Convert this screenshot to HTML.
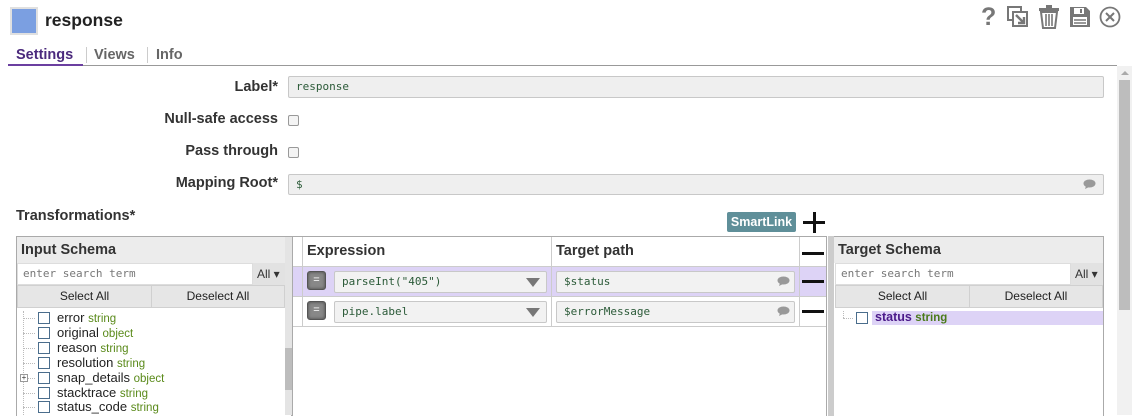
<!DOCTYPE html>
<html><head><meta charset="utf-8"><style>
*{box-sizing:border-box;margin:0;padding:0}
body{width:1140px;height:415px;overflow:hidden;background:#fff;font-family:"Liberation Sans",sans-serif;color:#333;position:relative}
.a{position:absolute}
.b{font-weight:bold}
.h{font-family:"Liberation Sans",sans-serif;font-weight:bold;font-size:14.5px}
.lbl{position:absolute;right:862px;font-size:14.5px;font-weight:bold;color:#333;white-space:nowrap}
.inp{position:absolute;background:#efefef;border:1px solid #c8c8c8;border-radius:2px;font-family:"DejaVu Sans Mono","Liberation Mono",monospace;font-size:11px;color:#2b5a38;padding-left:7px;line-height:20px}
.cb{position:absolute;width:11px;height:11px;border:1px solid #999;border-radius:2px;background:#f4f4f4}
.mono{font-family:"DejaVu Sans Mono","Liberation Mono",monospace}
.tree{font-family:"Liberation Sans",sans-serif;font-size:13px;color:#222;position:absolute;left:57px;white-space:nowrap}
.tree i{font-style:normal;color:#5a8a1a;font-size:11.5px}
.tcb{position:absolute;left:38px;width:12px;height:12px;border:1px solid #4a6d8c;background:#fff}
.dot{position:absolute;left:23px;width:12px;border-top:1px dotted #bbb}
.sel{position:absolute;font-family:"Liberation Sans",sans-serif;font-size:12px;color:#222;text-align:center;line-height:21px;background:#e6e6e6;border:1px solid #d0d0d0}
.minus{position:absolute;width:22px;height:3px;background:#111}
.eq{position:absolute;width:19px;height:19px;background:#888;border:1px solid #555;border-radius:3px;box-shadow:inset 0 0 3px #444;color:#fff;font-size:11px;text-align:center;line-height:17px}
</style></head><body>
<div class="a" style="left:10px;top:7px;width:28px;height:28px;background:#7b9fe1;border:2px solid #e0e0e0"></div>
<div class="a b" style="left:45px;top:10px;font-size:17.5px;color:#222">response</div>
<div class="a" style="left:981px;top:3px;font-size:25px;color:#777;font-weight:bold">?</div>
<svg class="a" style="left:1007px;top:6px" width="22" height="22" viewBox="0 0 22 22"><rect x="1" y="1" width="13" height="13" fill="none" stroke="#777" stroke-width="2"/><rect x="6" y="6" width="14" height="14" fill="#fff" stroke="#777" stroke-width="2"/><path d="M9 9l8 8M11 17h6v-6" stroke="#777" stroke-width="2.4" fill="none"/></svg>
<svg class="a" style="left:1038px;top:5px" width="22" height="24" viewBox="0 0 22 24"><rect x="1" y="3" width="20" height="3" fill="#777"/><rect x="8" y="0" width="6" height="3" fill="#777"/><path d="M3 7l2 16h12l2-16z" fill="none" stroke="#777" stroke-width="2"/><path d="M8 9v12M11 9v12M14 9v12" stroke="#777" stroke-width="1.6"/></svg>
<svg class="a" style="left:1069px;top:6px" width="22" height="22" viewBox="0 0 22 22"><path d="M1 1h16l4 4v16H1z" fill="#777"/><rect x="5" y="2" width="10" height="6" fill="#fff"/><rect x="11" y="3" width="2" height="4" fill="#777"/><rect x="4" y="11" width="14" height="8" fill="#fff"/><path d="M5 14h12M5 17h12" stroke="#777" stroke-width="1.5"/></svg>
<svg class="a" style="left:1099px;top:6px" width="22" height="22" viewBox="0 0 22 22"><circle cx="11" cy="11" r="9.5" fill="none" stroke="#777" stroke-width="1.8"/><path d="M7 7l8 8M15 7l-8 8" stroke="#777" stroke-width="2"/></svg>
<div class="a h" style="left:16px;top:47px;color:#4b2a7d">Settings</div>
<div class="a" style="left:8px;top:64px;width:75px;height:2px;background:#6b3fa0"></div>
<div class="a" style="left:86px;top:47px;width:1px;height:16px;background:#ccc"></div>
<div class="a h" style="left:94px;top:47px;color:#666">Views</div>
<div class="a" style="left:147px;top:47px;width:1px;height:16px;background:#ccc"></div>
<div class="a h" style="left:156px;top:47px;color:#666">Info</div>
<div class="a" style="left:83px;top:65px;width:1034px;height:1px;background:#999"></div>
<div class="a" style="left:1117px;top:66px;width:15px;height:349px;background:#f1f1f1"></div>
<div class="a" style="left:1119px;top:80px;width:11px;height:230px;background:#bdbdbd"></div>
<div class="a" style="left:1121px;top:71px;width:0;height:0;border-left:4px solid transparent;border-right:4px solid transparent;border-bottom:4px solid #aaa"></div>
<div class="lbl" style="top:79px">Label*</div>
<div class="inp" style="left:288px;top:76px;width:816px;height:22px">response</div>
<div class="lbl" style="top:111px">Null-safe access</div>
<div class="cb" style="left:288px;top:115px"></div>
<div class="lbl" style="top:143px">Pass through</div>
<div class="cb" style="left:288px;top:147px"></div>
<div class="lbl" style="top:175px">Mapping Root*</div>
<div class="inp" style="left:288px;top:174px;width:816px;height:21px">$</div>
<svg class="a" style="left:1083px;top:179px" width="13" height="11"><ellipse cx="6.5" cy="4.5" rx="6" ry="4" fill="#999"/><path d="M3 7l-1 3 4-2z" fill="#999"/></svg>
<div class="a h" style="left:16px;top:208px">Transformations*</div>
<div class="a b" style="left:727px;top:212px;width:69px;height:20px;background:#5f8f99;color:#fff;font-size:12.5px;line-height:20px;text-align:center;border-radius:2px;white-space:nowrap">SmartLink</div>
<div class="a" style="left:803px;top:221px;width:22px;height:3px;background:#111"></div>
<div class="a" style="left:813px;top:212px;width:3px;height:21px;background:#111"></div>
<div class="a" style="left:16px;top:236px;width:276px;height:180px;border:1px solid #aaa;border-bottom:none;background:#fff"></div>
<div class="a" style="left:17px;top:237px;width:268px;height:26px;background:#ececec"></div>
<div class="a h" style="left:21px;top:242px">Input Schema</div>
<div class="a mono" style="left:17px;top:263px;width:236px;height:22px;border:1px solid #ddd;font-size:11px;color:#777;padding-left:5px;line-height:20px">enter search term</div>
<div class="a" style="left:253px;top:263px;width:32px;height:22px;background:#e2e2e2;font-size:12px;line-height:22px;padding-left:4px">All ▾</div>
<div class="sel" style="left:17px;top:285px;width:135px;height:23px">Select All</div>
<div class="sel" style="left:151px;top:285px;width:134px;height:23px">Deselect All</div>
<div class="a" style="left:285px;top:237px;width:7px;height:178px;background:#e4e4e4"></div>
<div class="a" style="left:285px;top:348px;width:7px;height:42px;background:#bdbdbd"></div>
<div class="a" style="left:23px;top:311px;height:104px;border-left:1px dotted #bbb"></div>
<div class="dot" style="top:318px"></div><div class="tcb" style="top:312px"></div><div class="tree" style="top:310px">error <i>string</i></div>
<div class="dot" style="top:333px"></div><div class="tcb" style="top:327px"></div><div class="tree" style="top:325px">original <i>object</i></div>
<div class="dot" style="top:348px"></div><div class="tcb" style="top:342px"></div><div class="tree" style="top:340px">reason <i>string</i></div>
<div class="dot" style="top:363px"></div><div class="tcb" style="top:357px"></div><div class="tree" style="top:355px">resolution <i>string</i></div>
<div class="dot" style="top:378px"></div><div class="a" style="left:20px;top:374px;width:8px;height:8px;border:1px solid #999;background:#fff;font-size:8px;line-height:6px;text-align:center">+</div><div class="tcb" style="top:372px"></div><div class="tree" style="top:370px">snap_details <i>object</i></div>
<div class="dot" style="top:393px"></div><div class="tcb" style="top:387px"></div><div class="tree" style="top:385px">stacktrace <i>string</i></div>
<div class="dot" style="top:407px"></div><div class="tcb" style="top:401px"></div><div class="tree" style="top:399px">status_code <i>string</i></div>
<div class="a" style="left:292px;top:236px;width:535px;height:180px;border:1px solid #aaa;border-bottom:none"></div>
<div class="a" style="left:293px;top:266px;width:533px;height:30px;background:#ddd3f6"></div>
<div class="a" style="left:293px;top:266px;width:533px;height:1px;background:#ccc"></div>
<div class="a" style="left:293px;top:296px;width:533px;height:1px;background:#ccc"></div>
<div class="a" style="left:293px;top:326px;width:533px;height:1px;background:#ccc"></div>
<div class="a" style="left:302px;top:237px;width:1px;height:89px;background:#ccc"></div>
<div class="a" style="left:551px;top:237px;width:1px;height:89px;background:#ccc"></div>
<div class="a" style="left:799px;top:237px;width:1px;height:89px;background:#ccc"></div>
<div class="a h" style="left:307px;top:243px">Expression</div>
<div class="a h" style="left:556px;top:243px">Target path</div>
<div class="minus" style="left:802px;top:252px"></div>
<div class="eq" style="left:307px;top:271px">=</div>
<div class="inp" style="left:334px;top:271px;width:213px;height:22px;background:#f2f2f2">parseInt("405")</div>
<div class="a" style="left:526px;top:278px;border-left:7px solid transparent;border-right:7px solid transparent;border-top:9px solid #777"></div>
<div class="inp" style="left:556px;top:271px;width:239px;height:22px;background:#f2f2f2">$status</div>
<svg class="a" style="left:777px;top:276px" width="13" height="11"><ellipse cx="6.5" cy="4.5" rx="6" ry="4" fill="#999"/><path d="M3 7l-1 3 4-2z" fill="#999"/></svg>
<div class="minus" style="left:802px;top:280px"></div>
<div class="eq" style="left:307px;top:301px">=</div>
<div class="inp" style="left:334px;top:301px;width:213px;height:22px;background:#f2f2f2">pipe.label</div>
<div class="a" style="left:526px;top:308px;border-left:7px solid transparent;border-right:7px solid transparent;border-top:9px solid #777"></div>
<div class="inp" style="left:556px;top:301px;width:239px;height:22px;background:#f2f2f2">$errorMessage</div>
<svg class="a" style="left:777px;top:306px" width="13" height="11"><ellipse cx="6.5" cy="4.5" rx="6" ry="4" fill="#999"/><path d="M3 7l-1 3 4-2z" fill="#999"/></svg>
<div class="minus" style="left:802px;top:310px"></div>
<div class="a" style="left:828px;top:236px;width:6px;height:180px;background:#ccc"></div>
<div class="a" style="left:834px;top:236px;width:270px;height:180px;border:1px solid #aaa;border-bottom:none;border-left:none"></div>
<div class="a" style="left:834px;top:237px;width:269px;height:26px;background:#ececec"></div>
<div class="a h" style="left:838px;top:242px">Target Schema</div>
<div class="a mono" style="left:835px;top:263px;width:236px;height:22px;border:1px solid #ddd;font-size:11px;color:#777;padding-left:5px;line-height:20px">enter search term</div>
<div class="a" style="left:1071px;top:263px;width:32px;height:22px;background:#e2e2e2;font-size:12px;line-height:22px;padding-left:4px">All ▾</div>
<div class="sel" style="left:835px;top:285px;width:135px;height:23px">Select All</div>
<div class="sel" style="left:969px;top:285px;width:134px;height:23px">Deselect All</div>
<div class="a" style="left:872px;top:311px;width:231px;height:14px;background:#ddd3f6"></div>
<div class="a" style="left:843px;top:311px;height:7px;border-left:1px dotted #bbb"></div>
<div class="a" style="left:843px;top:318px;width:10px;border-top:1px dotted #bbb"></div>
<div class="a" style="left:856px;top:312px;width:12px;height:12px;border:1px solid #4a6d8c;background:#fff"></div>
<div class="a b" style="left:875px;top:310px;font-size:12.5px;color:#4b1a8a">status <span style="color:#4a7a1a;font-size:11.5px">string</span></div>
</body></html>
